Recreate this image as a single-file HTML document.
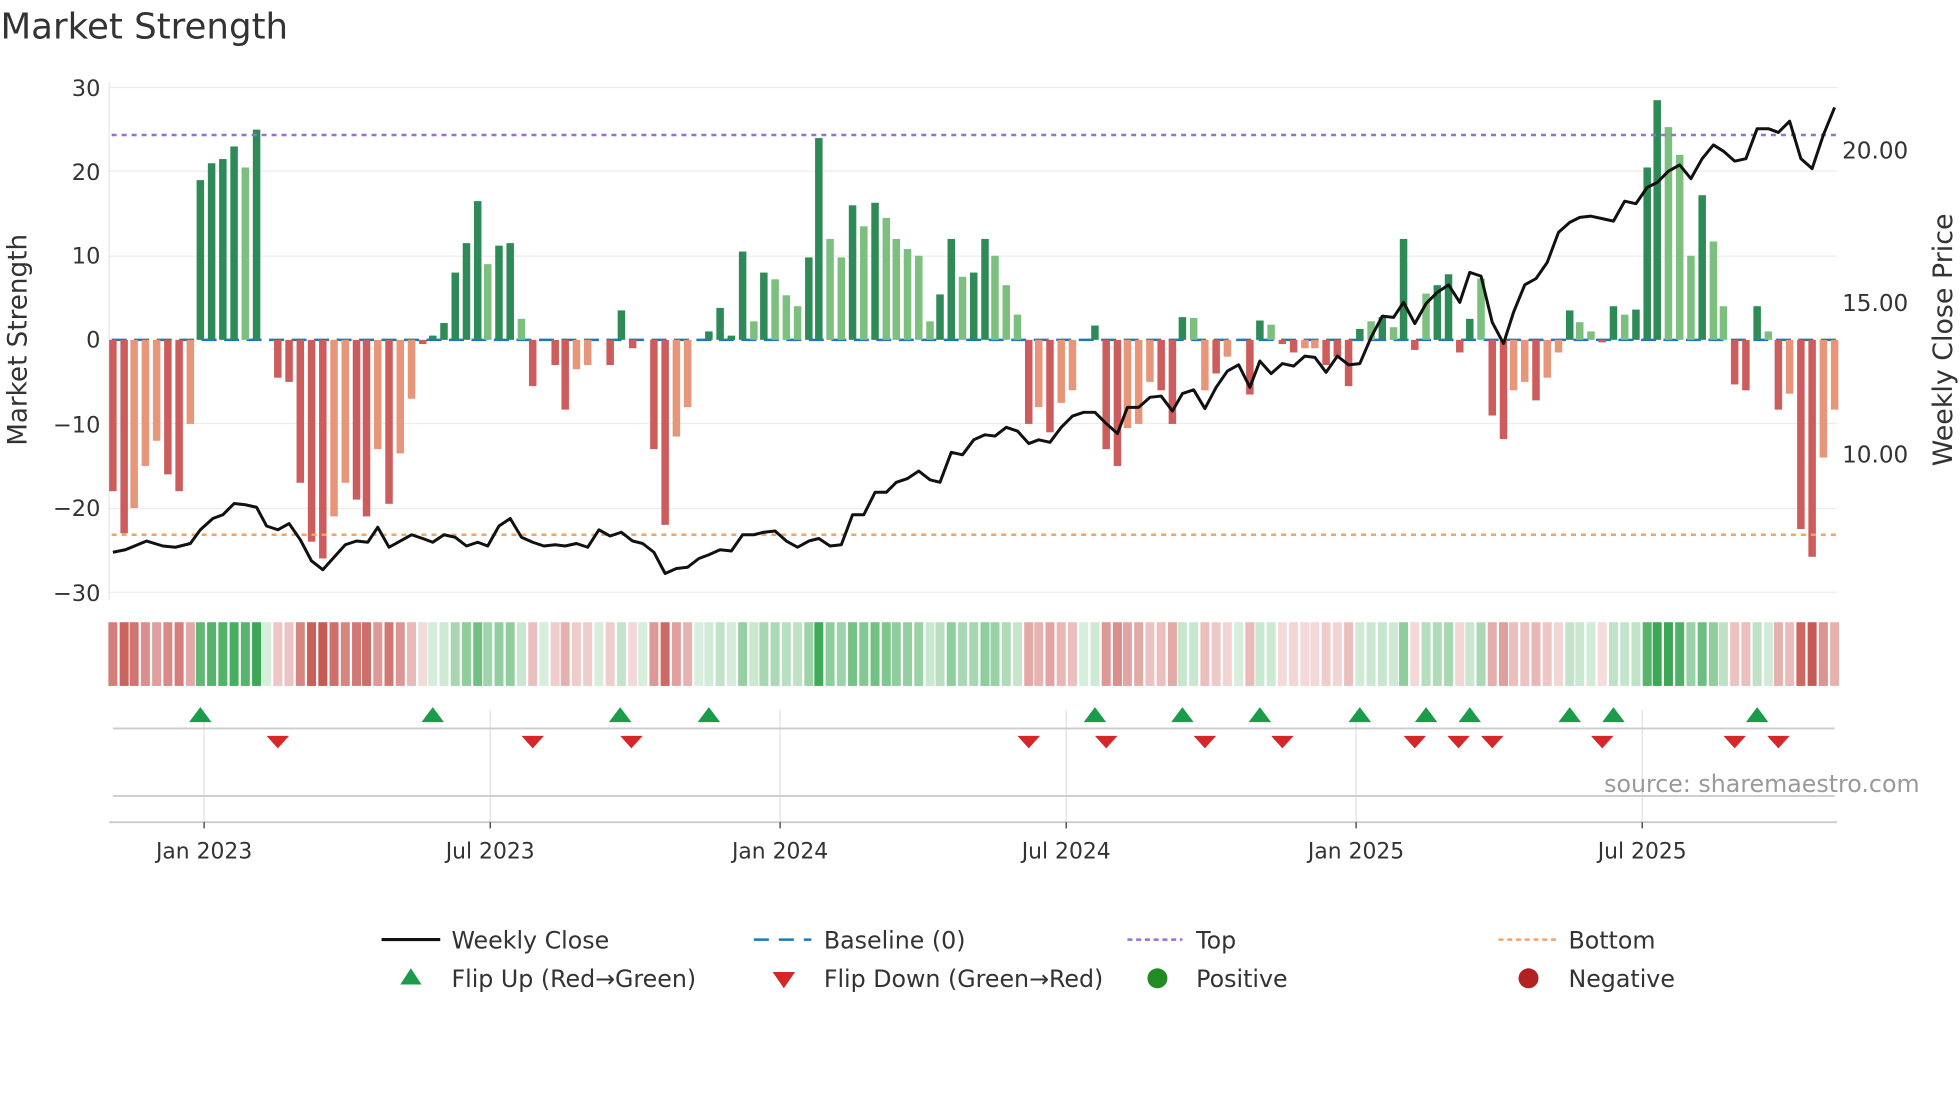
<!DOCTYPE html>
<html><head><meta charset="utf-8"><style>
html,body{margin:0;padding:0;background:#fff;}
svg{display:block;font-family:"DejaVu Sans","Liberation Sans",sans-serif;}
</style></head><body>
<svg id="c" width="1960" height="1102" viewBox="0 0 1568 882" xmlns="http://www.w3.org/2000/svg">
<rect width="1568" height="882" fill="#fff"/>
<text x="0" y="31" font-size="28.5" fill="#333">Market Strength</text>
<g stroke="#ececec" stroke-width="1">
<line x1="87" x2="1470" y1="70" y2="70"/><line x1="87" x2="1470" y1="137" y2="137"/><line x1="87" x2="1470" y1="205" y2="205"/><line x1="87" x2="1470" y1="339" y2="339"/><line x1="87" x2="1470" y1="407" y2="407"/><line x1="87" x2="1470" y1="474" y2="474"/>
</g>
<line x1="87" x2="87" y1="66" y2="480" stroke="#e6e6e6"/>
<g font-size="18" fill="#333" text-anchor="end">
<text x="80" y="77">30</text><text x="80" y="144">20</text><text x="80" y="211">10</text><text x="80" y="278">0</text><text x="80" y="346">−10</text><text x="80" y="413">−20</text><text x="80" y="481">−30</text>
</g>
<g font-size="18.5" fill="#333">
<text x="1474" y="127">20.00</text><text x="1474" y="249">15.00</text><text x="1474" y="370">10.00</text>
</g>
<text transform="translate(21,272) rotate(-90)" font-size="21" fill="#333" text-anchor="middle">Market Strength</text>
<text transform="translate(1562,272) rotate(-90)" font-size="21.5" fill="#333" text-anchor="middle">Weekly Close Price</text>
<line x1="89" x2="1470" y1="272" y2="272" stroke="#1f77b4" stroke-width="2" stroke-dasharray="12 6"/>
<g id="bars"></g>
<line x1="89" x2="1470" y1="108" y2="108" stroke="#9370db" stroke-width="2" stroke-dasharray="4 4"/>
<line x1="89" x2="1470" y1="428" y2="428" stroke="#f4a460" stroke-width="2" stroke-dasharray="4 4"/>
<polyline id="price" fill="none" stroke="#111" stroke-width="2.4" stroke-linejoin="round"/>
<g id="strip"></g>
<g stroke="#e2e2e2" stroke-width="1">
<line x1="163" x2="163" y1="568" y2="658"/><line x1="392" x2="392" y1="568" y2="658"/><line x1="624" x2="624" y1="568" y2="658"/><line x1="853" x2="853" y1="568" y2="658"/><line x1="1085" x2="1085" y1="568" y2="658"/><line x1="1314" x2="1314" y1="568" y2="658"/>
</g>
<line x1="90" x2="1468" y1="583" y2="583" stroke="#ccc" stroke-width="1.5"/>
<line x1="90" x2="1468" y1="637" y2="637" stroke="#ccc" stroke-width="1.5"/>
<line x1="87" x2="1470" y1="658" y2="658" stroke="#ccc" stroke-width="1.5"/>
<g id="marks"></g>
<text x="1536" y="634" font-size="19" fill="#999" text-anchor="end">source: sharemaestro.com</text>
<g stroke="#333"><line x1="163" x2="163" y1="658" y2="663"/><line x1="392" x2="392" y1="658" y2="663"/><line x1="624" x2="624" y1="658" y2="663"/><line x1="853" x2="853" y1="658" y2="663"/><line x1="1085" x2="1085" y1="658" y2="663"/><line x1="1314" x2="1314" y1="658" y2="663"/></g>
<g font-size="17.5" fill="#333" text-anchor="middle">
<text x="163" y="687">Jan 2023</text><text x="392" y="687">Jul 2023</text><text x="624" y="687">Jan 2024</text><text x="853" y="687">Jul 2024</text><text x="1085" y="687">Jan 2025</text><text x="1314" y="687">Jul 2025</text>
</g>
<g font-size="19" fill="#333">
<line x1="305" x2="352" y1="752" y2="752" stroke="#111" stroke-width="2.5"/><text x="361" y="759">Weekly Close</text>
<line x1="603" x2="649" y1="752" y2="752" stroke="#1f77b4" stroke-width="2" stroke-dasharray="12 8"/><text x="659" y="759">Baseline (0)</text>
<line x1="902" x2="946" y1="752" y2="752" stroke="#9370db" stroke-width="2" stroke-dasharray="4 3"/><text x="957" y="759">Top</text>
<line x1="1199" x2="1245" y1="752" y2="752" stroke="#f4a460" stroke-width="2" stroke-dasharray="4 3"/><text x="1255" y="759">Bottom</text>
<polygon points="320,788 337,788 328.5,775" fill="#1a9c4a"/><text x="361" y="790">Flip Up (Red→Green)</text>
<polygon points="618,778 636,778 627,791" fill="#d62728"/><text x="659" y="790">Flip Down (Green→Red)</text>
<circle cx="926" cy="783" r="8" fill="#228b22"/><text x="957" y="790">Positive</text>
<circle cx="1223" cy="783" r="8" fill="#b22222"/><text x="1255" y="790">Negative</text>
</g>
</svg>
<script>
var NS="http://www.w3.org/2000/svg";
function mk(parent,tag,attrs){var e=document.createElementNS(NS,tag);for(var k in attrs)e.setAttribute(k,attrs[k]);parent.appendChild(e);}
var d="90:-18,99:-23,107:-20L,116:-15L,125:-12L,134:-16,143:-18,152:-10L,160:19,169:21,178:21.5,187:23,196:20.5L,205:25,213:0,222:-4.5,231:-5,240:-17,249:-24,258:-26,267:-21L,276:-17L,285:-19,293:-21,302:-13L,311:-19.5,320:-13.5L,329:-7L,338:-0.5,346:0.5,355:2,364:8,373:11.5,382:16.5,390:9L,399:11.2,408:11.5,417:2.5L,426:-5.5,435:0,444:-3,452:-8.3,461:-3.5L,470:-3L,479:0,488:-3,497:3.5,506:-1,514:0,523:-13,532:-22,541:-11.5L,550:-8L,559:0,567:1,576:3.8,585:0.5,594:10.5,603:2.2L,611:8,620:7.2L,629:5.3L,638:4L,647:9.8,655:24,664:12L,673:9.8L,682:16,691:13.5L,700:16.3,709:14.5L,717:12L,726:10.8L,735:10L,744:2.2L,752:5.4,761:12,770:7.5L,779:8,788:12,796:10L,805:6.5L,814:3L,823:-10,831:-8L,840:-11,849:-7.5L,858:-6L,867:0,876:1.7,885:-13,894:-15,902:-10.5L,911:-10L,920:-5L,929:-6,938:-10,946:2.7,955:2.6L,964:-6L,973:-4,982:-2L,991:0,1000:-6.5,1008:2.3,1017:1.8L,1026:-0.5,1035:-1.5,1044:-1L,1052:-1L,1061:-3,1070:-2,1079:-5.5,1088:1.3,1097:2.2L,1106:2.7,1115:1.5L,1123:12,1132:-1.2,1141:5.5L,1150:6.5,1159:7.8,1168:-1.5,1176:2.5,1185:7.3L,1194:-9,1203:-11.8,1211:-6L,1220:-5L,1229:-7.2,1238:-4.5L,1247:-1.5L,1256:3.5,1264:2.1L,1273:1L,1282:-0.3,1291:4,1300:3L,1309:3.6,1318:20.5,1326:28.5,1335:25.3L,1344:22L,1353:10L,1362:17.2,1371:11.7L,1379:4L,1388:-5.3,1397:-6,1406:4,1415:1L,1423:-8.3,1432:-6.4L,1441:-22.5,1450:-25.8,1459:-14L,1468:-8.3L";
var bars=document.getElementById("bars"),strip=document.getElementById("strip"),marks=document.getElementById("marks");
d.split(",").forEach(function(t){var p=t.split(":"),x=+p[0],L=p[1].slice(-1)=="L",v=parseFloat(p[1]);
var h=Math.abs(v)*6.73,c;
if(v>0)c=L?"#7dbf7f":"#2e8a57";else c=L?"#e8967a":"#cd5c5c";
if(v!=0)mk(bars,"rect",{x:x-3,y:(v>0?272-h:272),width:6,height:h,fill:c});
var o=0.2+0.8*Math.min(Math.abs(v)/25,1);var sc=v>=0?"rgb(60,168,85)":"rgb(200,90,85)";
mk(strip,"rect",{x:x-3.6,y:498,width:7.2,height:51,fill:sc,"fill-opacity":o.toFixed(2)});});
document.getElementById("price").setAttribute("points","90,442 100,440 117,433 130,437 140,438 152,435 160,424 170,415 178,412 187,403 196,404 205,406 213,421 222,424 231,419 240,432 249,449 258,456 267,446 276,436 285,433 294,434 302,422 311,438 320,433 329,428 338,431 346,434 355,428 364,430 373,437 382,434 390,437 399,421 408,415 417,430 426,434 435,437 444,436 452,437 461,435 470,438 479,424 488,429 497,426 506,433 514,435 523,442 532,459 541,455 550,454 559,447 567,444 576,440 585,441 594,428 603,428 611,426 620,425 629,433 638,438 647,433 655,431 664,437 673,436 682,412 691,412 700,394 709,394 717,386 726,383 735,377 744,384 752,386 761,362 770,364 779,352 788,348 796,349 805,342 814,345 823,355 831,352 840,354 849,342 858,333 867,330 876,330 885,339 894,347 902,326 911,326 920,318 929,317 938,329 946,315 955,312 964,327 973,310 982,297 991,292 1000,310 1008,289 1017,299 1026,291 1035,293 1044,285 1052,286 1061,298 1070,285 1079,292 1088,291 1097,270 1106,253 1115,254 1123,242 1132,259 1141,243 1150,234 1159,228 1168,242 1176,218 1185,221 1194,258 1203,275 1211,250 1220,228 1229,223 1238,210 1247,186 1256,178 1264,174 1273,173 1282,175 1291,177 1300,161 1309,163 1318,150 1326,146 1335,137 1344,132 1353,143 1362,127 1371,116 1379,121 1388,129 1397,127 1406,103 1415,103 1423,106 1432,97 1441,127 1450,135 1459,108 1468,86");
[160,346,496,567,876,946,1008,1088,1141,1176,1256,1291,1406].forEach(function(x){mk(marks,"polygon",{points:(x-9)+",578 "+(x+9)+",578 "+x+",566",fill:"#1a9c4a"});});
[222,426,505,823,885,964,1026,1132,1167,1194,1282,1388,1423].forEach(function(x){mk(marks,"polygon",{points:(x-9)+",589 "+(x+9)+",589 "+x+",599",fill:"#d62728"});});
</script>
</body></html>
